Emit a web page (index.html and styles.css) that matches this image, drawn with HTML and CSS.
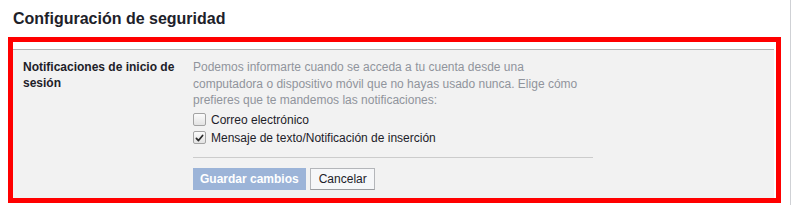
FILE: index.html
```html
<!DOCTYPE html>
<html lang="es">
<head>
<meta charset="utf-8">
<title>Configuración de seguridad</title>
<link rel="stylesheet" href="styles.css">
</head>
<body>
<div class="page">
  <h1 class="title">Configuración de seguridad</h1>
  <div class="highlight">
    <div class="panel">
      <div class="label">Notificaciones de inicio de sesión</div>
      <div class="content">
        <p class="desc">Podemos informarte cuando se acceda a tu cuenta desde una computadora o dispositivo móvil que no hayas usado nunca. Elige cómo prefieres que te mandemos las notificaciones:</p>
        <label class="option"><span class="box"></span><span>Correo electrónico</span></label>
        <label class="option"><span class="box checked"><svg viewBox="0 0 12 12" width="12" height="12"><path d="M2.6 6.4 L4.9 8.8 L9.4 3.2" fill="none" stroke="#2b2b2b" stroke-width="1.9" stroke-linecap="round" stroke-linejoin="round"/></svg></span><span>Mensaje de texto/Notificación de inserción</span></label>
        <div class="sep"></div>
        <div class="buttons">
          <button class="btn primary" disabled>Guardar cambios</button>
          <button class="btn">Cancelar</button>
        </div>
      </div>
    </div>
  </div>
</div>
</body>
</html>
```
FILE: styles.css
```css
html, body {
  margin: 0;
  padding: 0;
  background: #fff;
}
body {
  font-family: "Liberation Sans", Arial, Helvetica, sans-serif;
  font-size: 12px;
  color: #1d2129;
}
.page {
  width: 791px;
  height: 205px;
  border-right: 1px solid #cfd1d5;
  box-sizing: border-box;
  padding-top: 9px;
}
.title {
  margin: 0 0 8px 13px;
  font-size: 16px;
  line-height: 20px;
  font-weight: bold;
  color: #1d2129;
}
.highlight {
  margin-left: 8px;
  width: 761px;
  border: 5px solid #ff0000;
  padding: 7px 2px 0 0;
  box-sizing: content-box;
}
.panel {
  background: #f2f2f2;
  border-top: 1px solid #b3b3b3;
  display: flex;
  gap: 10px;
  padding: 9px 0 8px 10px;
}
.label {
  width: 160px;
  font-weight: bold;
  line-height: 16px;
  color: #1d2129;
}
.content {
  width: 400px;
}
.desc {
  margin: 0 0 2px;
  line-height: 16.5px;
  color: #90949c;
}
.option {
  display: flex;
  align-items: center;
  gap: 5px;
  height: 18px;
  color: #1d2129;
}
.box {
  width: 11px;
  height: 11px;
  border: 1px solid #a3a3a3;
  border-radius: 2px;
  background: linear-gradient(#fbfbfb, #e3e3e3);
  display: flex;
  align-items: center;
  justify-content: center;
}
.box svg {
  display: block;
}
.sep {
  border-top: 1px solid #cccccc;
  margin: 10px 0 10px;
}
.buttons {
  display: flex;
  gap: 4px;
}
.btn {
  font-family: "Liberation Sans", Arial, Helvetica, sans-serif;
  font-size: 12px;
  height: 22px;
  padding: 0 7px 0 8px;
  border: 1px solid #b4b6ba;
  border-bottom-color: #9a9ca0;
  background: #f6f7f9;
  color: #1d2129;
  line-height: 20px;
  border-radius: 0;
  margin: 0;
}
.btn.primary {
  background: #9cb4d8;
  border-color: #9cb4d8;
  color: #fff;
  font-weight: bold;
  padding: 0 6px;
}
```
